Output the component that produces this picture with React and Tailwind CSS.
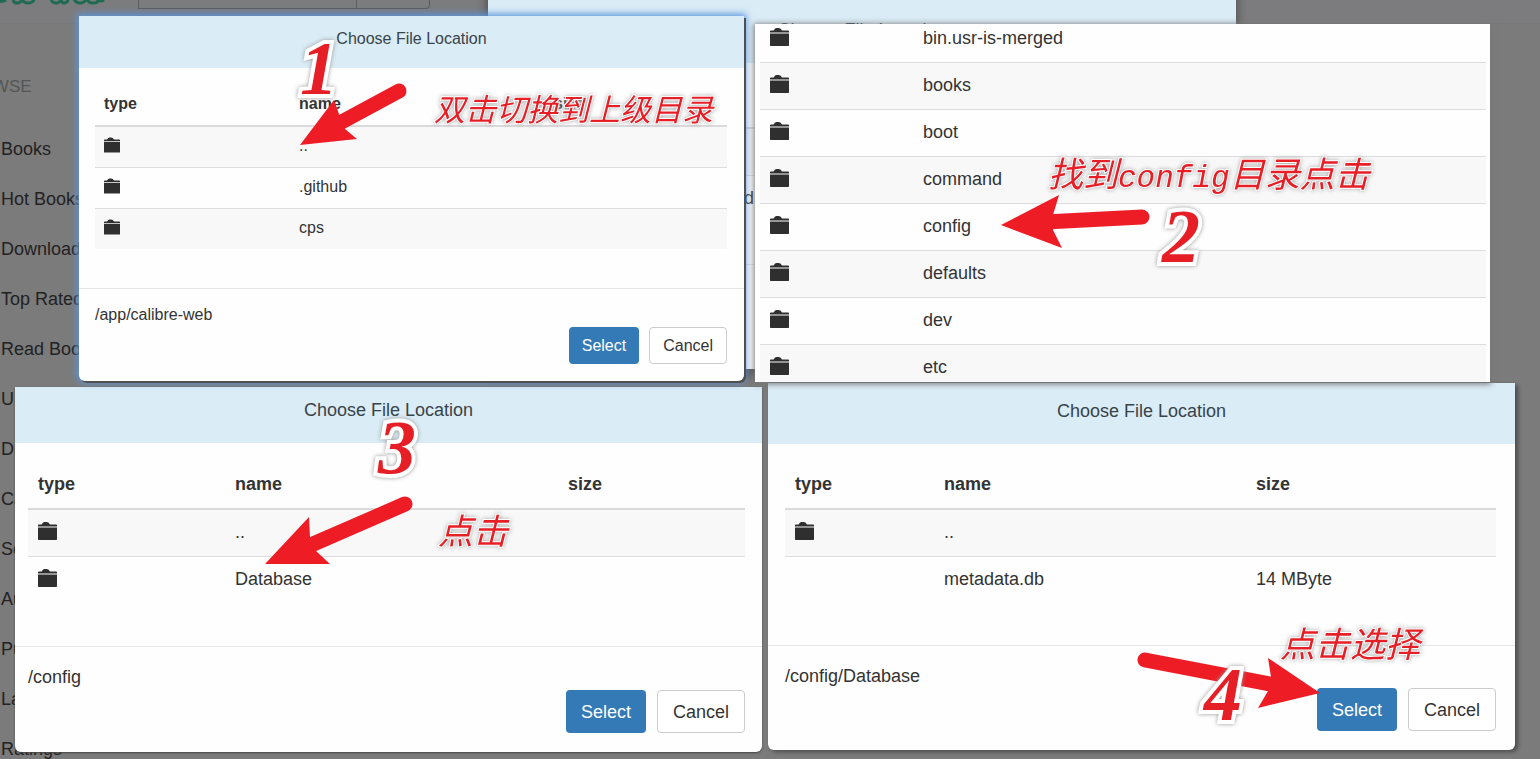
const NAV = [
  "Books", "Hot Books", "Downloaded Books", "Top Rated Books", "Read Books", "Unread Books",
  "Discover", "Categories", "Series", "Authors", "Publishers", "Languages", "Ratings",
];

const UP = { folder: true, name: ".." };
const DATABASE_ROWS = [UP, { name: "metadata.db", size: "14 MByte" }];
const ROOT_ROWS = ["bin.usr-is-merged", "books", "boot", "command", "config", "defaults", "dev", "etc"];

const SMALL = {
  text: "text-base",
  header: "h-[52px] pt-[11px]",
  table: "mt-[15px] ml-4 mr-[17px]",
  headRow: "h-[43px]",
  row: "h-[41px]",
  head: "pl-[9px]",
  cell: "pl-[9px] pb-0.5",
  icon: "w-4 h-4",
  body: "h-[220px]",
  footer: "pl-4 pr-[17px] pt-[14px]",
  buttons: "gap-[10px]",
  button: "h-[37px] px-[13px]",
};

const LARGE = {
  text: "text-lg",
  header: "h-[56px] pt-[11px]",
  table: "mt-[17px] ml-[13px] mr-[17px]",
  headRow: "h-[49px]",
  row: "h-[47px]",
  head: "pl-[10px]",
  cell: "pl-[10px] pb-px",
  icon: "w-[19px] h-[18px]",
  body: "h-[203px]",
  footer: "pl-[13px] pr-[17px] pt-[18px]",
  buttons: "pt-px gap-[11px]",
  button: "h-[43px] px-[15px]",
};

const WIDE = {
  ...LARGE,
  header: "h-[61px] pt-[16px]",
  table: "mt-4 ml-[17px] mr-[19px]",
  body: "h-[201px]",
  footer: "pl-[17px] pr-[19px] pt-[18px]",
  buttons: "gap-[11px]",
};

const BACKDROP = { ...WIDE, header: "h-[77px] pt-[32px]" };

function Folder({ className }) {
  return (
    <svg viewBox="0 0 19 18" className={className} fill="#2f2f2f" role="img" aria-label="folder">
      <path d="M0 4.5V3.2Q0 2.4.9 2.4H3.6Q5 0 6.500 0H8.500Q10.500 0 12 2.400H18Q19 2.400 19 3.200V4.500Z" />
      <path d="M0 5.500H19V17.300Q19 18 18.300 18H.7Q0 18 0 17.300Z" />
    </svg>
  );
}

function Rows({ rows, s, oddShaded = true }) {
  return rows.map((r, i) => (
    <tr
      key={r.name}
      className={`${s.row} ${(i % 2 === 0) === oddShaded ? "bg-[#f9f8f9]" : ""} ${
        i < rows.length - 1 ? "border-b border-[#dddde0]" : ""
      }`}
    >
      <td className={s.cell}>{r.folder && <Folder className={`${s.icon} -mt-0.5`} />}</td>
      <td className={s.cell}>{r.name}</td>
      <td className={s.cell}>{r.size}</td>
    </tr>
  ));
}

function Dialog({ className, s, cols, rows, path }) {
  return (
    <section className={`overflow-hidden rounded-b-md bg-[#fefefe] text-[#333] ${s.text} ${className}`}>
      <h2 className={`bg-[#daecf6] text-center leading-6 text-[#38434a] ${s.header}`}>Choose File Location</h2>
      <div className={`flex flex-col ${s.body}`}>
        <div className={s.table}>
          <table className="w-full table-fixed border-collapse text-left">
            <colgroup>
              <col className={cols[0]} />
              <col className={cols[1]} />
              <col />
            </colgroup>
            <thead>
              <tr className={`${s.headRow} border-b-2 border-[#dadadd]`}>
                <th className={s.head}>type</th>
                <th className={s.head}>name</th>
                <th className={s.head}>size</th>
              </tr>
            </thead>
            <tbody>
              <Rows rows={rows} s={s} />
            </tbody>
          </table>
        </div>
      </div>
      <footer className={`border-t border-[#e5e5e7] ${s.footer}`}>
        <p className="leading-6">{path}</p>
        <div className={`flex justify-end ${s.buttons}`}>
          <button type="button" className={`rounded bg-[#337ab7] text-white ${s.button}`}>Select</button>
          <button type="button" className={`rounded border border-[#ccc] bg-white ${s.button}`}>Cancel</button>
        </div>
      </footer>
    </section>
  );
}

const INK = "absolute whitespace-nowrap italic leading-none text-[#e61e26] [paint-order:stroke_fill]";

function Note({ className, children }) {
  return (
    <p
      className={`${INK} font-['Liberation_Mono','Noto_Sans_CJK_SC',monospace] [-webkit-text-stroke:2px_#fff] [filter:drop-shadow(0_0_2px_#aaa)] ${className}`}
    >
      {children}
    </p>
  );
}

function Step({ className, children }) {
  return (
    <p
      className={`${INK} font-['Liberation_Serif',serif] text-[76px] font-bold [-webkit-text-stroke:8px_#fff] [filter:drop-shadow(0_0_2px_#999)] ${className}`}
    >
      {children}
    </p>
  );
}

function Arrow({ head, line }) {
  return (
    <g>
      <path d={line} stroke="#ee1c25" strokeWidth="15" strokeLinecap="round" fill="none" />
      <path d={head} fill="#ee1c25" />
    </g>
  );
}

export default function App() {
  return (
    <div className="relative h-screen overflow-hidden bg-[#7b7b7b] font-['Liberation_Sans',Arial,sans-serif] text-[#222]">
      <header className="flex h-6 items-start border-b border-[#777] bg-[#7c7c7e]">
        <a href="#home" aria-label="Home" className="mr-[33px] block">
          <svg viewBox="0 0 105 6" className="h-[6px] w-[105px]" fill="none" stroke="#1e6b52" strokeWidth="3">
            <path d="M0 1.500Q4 1.500 6 0M13 0Q14 3.500 18 3Q21 2 22 0Q25 3.500 29 3Q34 2 34-1M51 0Q53 3.500 57 3Q60 2 61 0Q62 3.500 65 3Q68 2 68-1M74-1Q76 3.500 81 3Q85 2 87-1Q89 3.500 93 3Q98 3 98 0Q101 2 104 0" />
          </svg>
        </a>
        <input
          type="text"
          aria-label="Search"
          className="-mt-6 h-[33px] w-[219px] border border-[#5c5c5e] bg-transparent"
        />
        <button
          type="button"
          aria-label="Search"
          className="-mt-6 h-[33px] w-[73px] rounded-r border border-l-0 border-[#5c5c5e]"
        />
      </header>
      <nav className="w-52 pt-[38px] text-lg">
        <h2 className="-ml-11 mb-3 text-[17px] leading-[50px] text-[#555]">BROWSE</h2>
        <ul>
          {NAV.map((n) => (
            <li key={n} className="whitespace-nowrap pl-px leading-[50px]">
              <a href="#list">{n}</a>
            </li>
          ))}
        </ul>
      </nav>

      <Dialog
        className="absolute -top-[14px] left-[488px] h-[383px] w-[748px] shadow-[0_4px_8px_2px_#555]"
        s={BACKDROP}
        cols={["w-[149px]", "w-[312px]"]}
        rows={DATABASE_ROWS}
        path="/config/Database"
      />

      <main className="absolute inset-0 flex items-start pl-[15px]">
        <div className="flex w-[747px] shrink-0 flex-col gap-[6px] pt-4">
          <Dialog
            className="z-10 ml-16 mr-[18px] h-[365px] shadow-[2px_2px_0_0_#505050,0_0_7px_2px_#5c95dc]"
            s={SMALL}
            cols={["w-[195px]", "w-[255px]"]}
            rows={[UP, { folder: true, name: ".github" }, { folder: true, name: "cps" }]}
            path="/app/calibre-web"
          />
          <Dialog
            className="h-[365px] shadow-[0_1px_2px_0_#444]"
            s={LARGE}
            cols={["w-[197px]", "w-[333px]"]}
            rows={[UP, { folder: true, name: "Database" }]}
            path="/config"
          />
        </div>
        <div className="z-20 -ml-[7px] flex w-[760px] shrink-0 flex-col gap-px pt-6">
          <section className="z-10 mr-[25px] h-[358px] overflow-hidden bg-[#fefefe] pl-[5px] pr-1 text-lg text-[#333] shadow-[0_1px_6px_1px_#777]">
            <table className="-mt-[9px] w-full table-fixed border-collapse text-left">
              <colgroup>
                <col className="w-[153px]" />
                <col />
                <col className="w-[180px]" />
              </colgroup>
              <tbody>
                <Rows rows={ROOT_ROWS.map((name) => ({ folder: true, name }))} s={LARGE} oddShaded={false} />
              </tbody>
            </table>
          </section>
          <Dialog
            className="ml-[13px] h-[367px] shadow-[3px_2px_4px_0_#4c4c4c]"
            s={WIDE}
            cols={["w-[149px]", "w-[312px]"]}
            rows={DATABASE_ROWS}
            path="/config/Database"
          />
        </div>
      </main>

      <div className="pointer-events-none absolute inset-0 z-30">
        <svg viewBox="0 0 1540 759" className="h-[759px] w-[1540px] max-w-none" aria-hidden="true">
          <Arrow line="M399 91L336 125" head="M300 145L334 100L340 117L345 129L357 139Z" />
          <Arrow line="M1142 217L1045 222" head="M1001 225L1059 195L1053 215L1053 230L1062 248Z" />
          <Arrow line="M405 504L304 548" head="M265 564L309 517L310 537L316 551L330 564Z" />
          <Arrow line="M1145 660L1280 686" head="M1320 693L1268 658L1271 677L1268 691L1258 708Z" />
        </svg>

        <Step className="left-[300px] top-[30px]">1</Step>
        <Step className="left-[1162px] top-[198px]">2</Step>
        <Step className="left-[378px] top-[409px]">3</Step>
        <Step className="left-[1204px] top-[656px]">4</Step>

        <Note className="left-[434px] top-[97px] text-[31px]">双击切换到上级目录</Note>
        <Note className="left-[1048px] top-[161px] text-[35px]">
          找到<span className="text-[31px]">config</span>目录点击
        </Note>
        <Note className="left-[438px] top-[518px] text-[35px]">点击</Note>
        <Note className="left-[1280px] top-[631px] text-[35px]">点击选择</Note>
      </div>
    </div>
  );
}
